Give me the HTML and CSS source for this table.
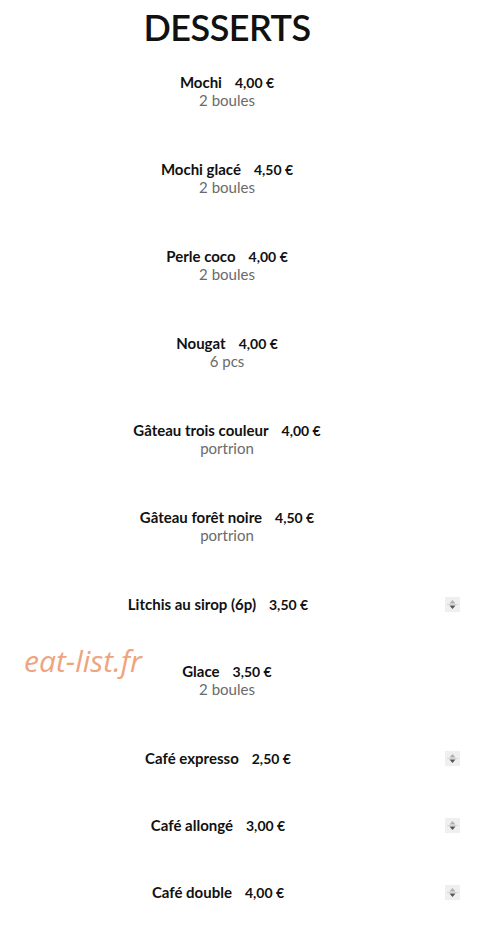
FILE: index.html
```html
<!DOCTYPE html>
<html lang="fr">
<head>
    <meta charset="UTF-8">
    <meta name="viewport" content="width=device-width, initial-scale=1.0">
    <title>Desserts</title>
    <link rel="stylesheet" href="styles.css">
</head>
<body>
    <div class="menu">
        <h1>DESSERTS</h1>

        <div class="item">
            <div class="item-text">
                <div class="item-line"><span class="name">Mochi</span><span class="price">4,00 €</span></div>
                <div class="sub">2 boules</div>
            </div>
        </div>

        <div class="item">
            <div class="item-text">
                <div class="item-line"><span class="name">Mochi glacé</span><span class="price">4,50 €</span></div>
                <div class="sub">2 boules</div>
            </div>
        </div>

        <div class="item">
            <div class="item-text">
                <div class="item-line"><span class="name">Perle coco</span><span class="price">4,00 €</span></div>
                <div class="sub">2 boules</div>
            </div>
        </div>

        <div class="item">
            <div class="item-text">
                <div class="item-line"><span class="name">Nougat</span><span class="price">4,00 €</span></div>
                <div class="sub">6 pcs</div>
            </div>
        </div>

        <div class="item">
            <div class="item-text">
                <div class="item-line"><span class="name">Gâteau trois couleur</span><span class="price">4,00 €</span></div>
                <div class="sub">portrion</div>
            </div>
        </div>

        <div class="item">
            <div class="item-text">
                <div class="item-line"><span class="name">Gâteau forêt noire</span><span class="price">4,50 €</span></div>
                <div class="sub">portrion</div>
            </div>
        </div>

        <div class="item has-qty">
            <div class="item-text">
                <div class="item-line"><span class="name">Litchis au sirop (6p)</span><span class="price">3,50 €</span></div>
            </div>
            <div class="qty">
                <svg width="15" height="15" viewBox="0 0 15 15"><path d="M4.5 6.5 L7.5 3 L10.5 6.5 Z" fill="#b0b0b0"/><rect x="2" y="7" width="11" height="1" fill="#d6d6d6"/><path d="M4.5 8.5 L10.5 8.5 L7.5 12 Z" fill="#555555"/></svg>
            </div>
        </div>

        <div class="item">
            <div class="item-text">
                <div class="item-line"><span class="name">Glace</span><span class="price">3,50 €</span></div>
                <div class="sub">2 boules</div>
            </div>
        </div>

        <div class="item has-qty">
            <div class="item-text">
                <div class="item-line"><span class="name">Café expresso</span><span class="price">2,50 €</span></div>
            </div>
            <div class="qty">
                <svg width="15" height="15" viewBox="0 0 15 15"><path d="M4.5 6.5 L7.5 3 L10.5 6.5 Z" fill="#b0b0b0"/><rect x="2" y="7" width="11" height="1" fill="#d6d6d6"/><path d="M4.5 8.5 L10.5 8.5 L7.5 12 Z" fill="#555555"/></svg>
            </div>
        </div>

        <div class="item has-qty">
            <div class="item-text">
                <div class="item-line"><span class="name">Café allongé</span><span class="price">3,00 €</span></div>
            </div>
            <div class="qty">
                <svg width="15" height="15" viewBox="0 0 15 15"><path d="M4.5 6.5 L7.5 3 L10.5 6.5 Z" fill="#b0b0b0"/><rect x="2" y="7" width="11" height="1" fill="#d6d6d6"/><path d="M4.5 8.5 L10.5 8.5 L7.5 12 Z" fill="#555555"/></svg>
            </div>
        </div>

        <div class="item has-qty">
            <div class="item-text">
                <div class="item-line"><span class="name">Café double</span><span class="price">4,00 €</span></div>
            </div>
            <div class="qty">
                <svg width="15" height="15" viewBox="0 0 15 15"><path d="M4.5 6.5 L7.5 3 L10.5 6.5 Z" fill="#b0b0b0"/><rect x="2" y="7" width="11" height="1" fill="#d6d6d6"/><path d="M4.5 8.5 L10.5 8.5 L7.5 12 Z" fill="#555555"/></svg>
            </div>
        </div>

        <div class="watermark">eat-list.fr</div>
    </div>
</body>
</html>
```

FILE: styles.css
```css
body {
    margin: 0;
    background: #ffffff;
    font-family: Lato, "Liberation Sans", sans-serif;
    color: #111111;
}
.menu {
    position: relative;
    width: 454px;
}
h1 {
    margin: 5px 0 25px;
    text-align: center;
    font-size: 36px;
    line-height: 44px;
    font-weight: 600;
    letter-spacing: -0.5px;
    color: #111111;
}
.item {
    display: flex;
    align-items: center;
    margin-bottom: 51px;
}
.item-text {
    flex-shrink: 0;
    width: 454px;
    text-align: center;
}
.has-qty .item-text {
    width: 436px;
}
.item-line {
    height: 16px;
    line-height: 16px;
    font-size: 15px;
    font-weight: 700;
}
.price {
    margin-left: 13px;
    font-size: 14px;
    line-height: 16px;
}
.sub {
    line-height: 20px;
    font-size: 15px;
    color: #6a6a6a;
}
.qty {
    flex-shrink: 0;
    margin-left: 9px;
    width: 15px;
    height: 15px;
    background: #efefef;
}
.qty svg {
    display: block;
}
.watermark {
    position: absolute;
    left: 24px;
    top: 635px;
    font-family: "Open Sans", sans-serif;
    font-style: italic;
    font-size: 30px;
    color: #eea47e;
}
```
